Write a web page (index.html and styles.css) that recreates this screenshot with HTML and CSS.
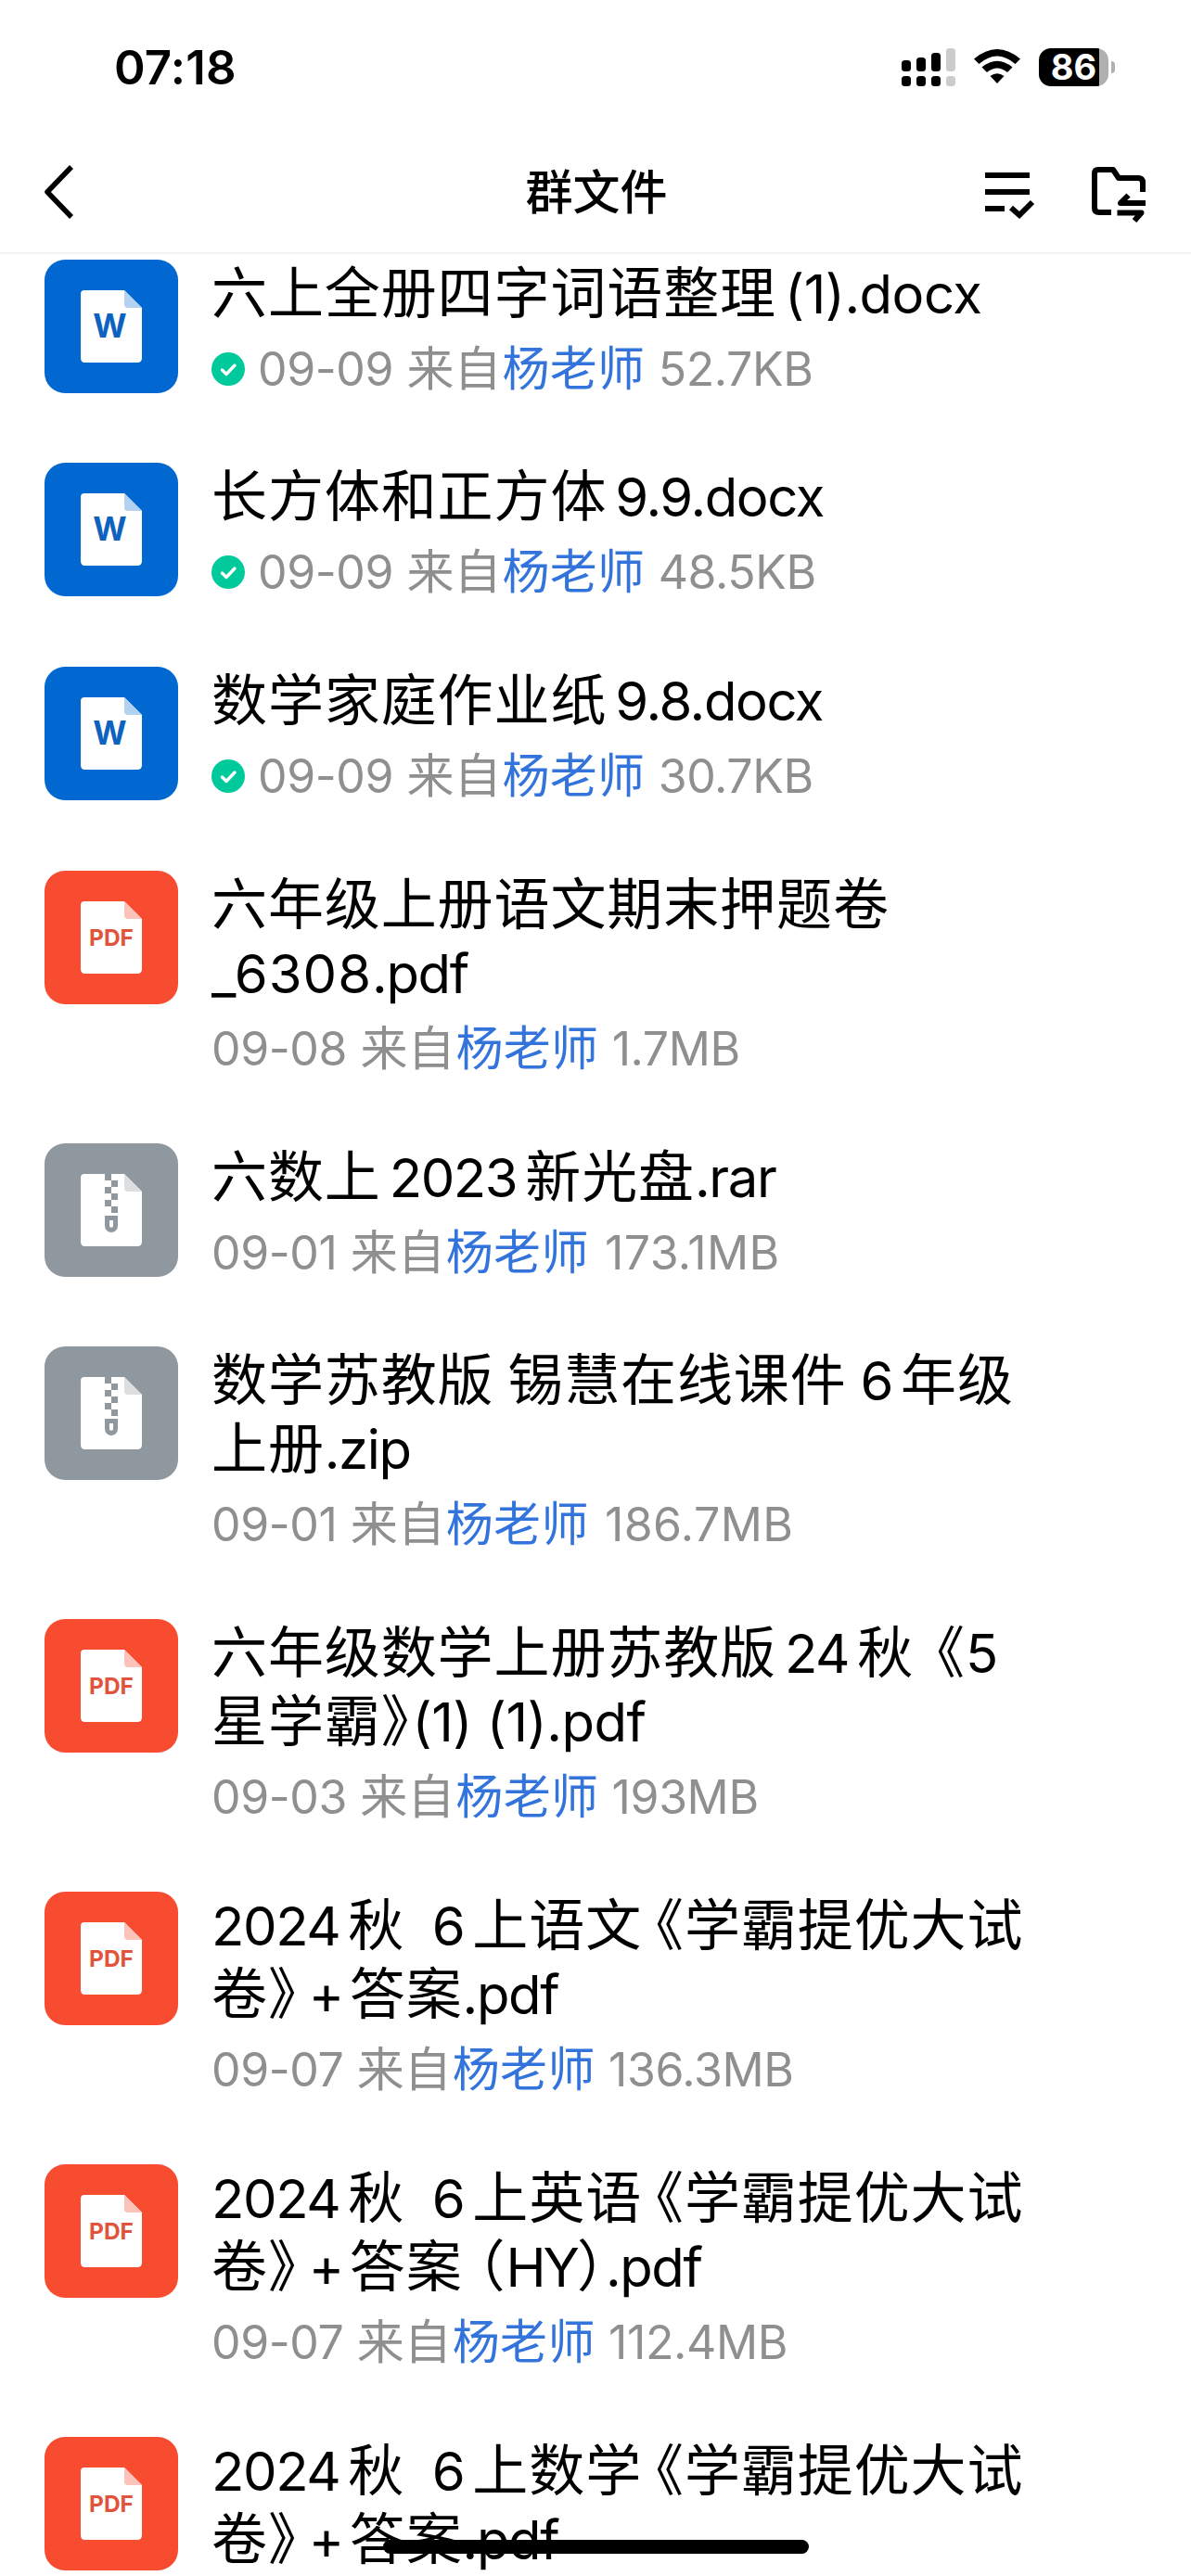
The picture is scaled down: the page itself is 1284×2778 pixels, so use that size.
FILE: index.html
```html
<!DOCTYPE html>
<html lang="zh-CN">
<head>
    <meta charset="UTF-8">
    <meta name="viewport" content="width=device-width, initial-scale=1.0">
    <title>群文件</title>
    <link rel="stylesheet" href="styles.css">
</head>
<body>
    <!-- Símbolos reutilizados en la lista -->
    <svg width="0" height="0" class="symbols">
        <symbol id="sheet" viewBox="0 0 144 144">
            <path fill="#fff" d="M43 33H86L105 52V106Q105 111 100 111H43.500Q39 111 39 106V37Q39 33 43 33Z"/>
        </symbol>
        <symbol id="doc" viewBox="0 0 144 144">
            <use href="#sheet"/>
            <path fill="#b3d1f0" d="M86 33L105 52H90Q86 52 86 48Z"/>
        </symbol>
        <symbol id="pdf" viewBox="0 0 144 144">
            <use href="#sheet"/>
            <path fill="#fdc3bb" d="M86 33L105 52H90Q86 52 86 48Z"/>
        </symbol>
        <symbol id="zip" viewBox="0 0 144 144">
            <use href="#sheet"/>
            <path fill="#dcdee0" d="M86 33L105 52H90Q86 52 86 48Z"/>
            <path fill="#8f979f" d="M65 33h7v7h-7zM72 40h7v7h-7zM65 47h7v7h-7zM72 54h7v7h-7zM65 61h7v7h-7zM72 68h7v7h-7z"/>
            <path fill="#8f979f" fill-rule="evenodd" d="M65 78H79V89A7 7 0 0 1 65 89ZM70 83V89.500Q72 92 74 89.500V83Z"/>
        </symbol>
        <symbol id="done" viewBox="0 0 36 36">
            <circle cx="18" cy="18" r="18" fill="#00c99b"/>
            <path fill="none" stroke="#fff" stroke-width="3.400" stroke-linecap="round" stroke-linejoin="round" d="M11.500 19L16 23.500L25 14"/>
        </symbol>
    </svg>

    <div class="screen">
        <div class="status-bar">
            <span class="time">07:18</span>
            <div class="status-icons">
                <svg class="signal" viewBox="0 0 58 41">
                    <rect x="0" y="13" width="10" height="12" rx="3.500"/>
                    <rect x="16" y="10" width="10" height="15" rx="3.500"/>
                    <rect x="32" y="5" width="10" height="20" rx="3.500"/>
                    <rect x="48" y="0" width="10" height="25" rx="3.500" fill="#ccc"/>
                    <rect x="0" y="30" width="10" height="11" rx="3.500"/>
                    <rect x="16" y="30" width="10" height="11" rx="3.500"/>
                    <rect x="32" y="30" width="10" height="11" rx="3.500"/>
                    <rect x="48" y="30" width="10" height="11" rx="3.500" fill="#ccc"/>
                </svg>
                <svg class="wifi" viewBox="0 0 52 38">
                    <path d="M1 10.500Q26 -10.500 51 10.500L45.500 16Q26 -1 6.500 16Z"/>
                    <path d="M9.500 19.500Q26 6 42.500 19.500L37 25Q26 16 15 25Z"/>
                    <path d="M18.500 29Q26 23.500 33.500 29L26 37Z"/>
                </svg>
                <div class="battery">
                    <div class="battery-body">86</div>
                    <div class="battery-cap"></div>
                </div>
            </div>
        </div>

        <div class="nav-bar">
            <svg class="back" viewBox="0 0 32 58">
                <path d="M29 2L3 29L29 56"/>
            </svg>
            <h1>群文件</h1>
            <div class="nav-actions">
                <svg class="sort" viewBox="0 0 54 52">
                    <path d="M0 3H48M0 21H48M0 39H21"/>
                    <path d="M28 38L37 46L51 32"/>
                </svg>
                <svg class="folder" viewBox="0 0 58 60">
                    <path d="M21 49H8Q3 49 3 44V7Q3 3 7 3H23L29 12H50Q55 12 55 17V27"/>
                    <path d="M58 39H31L39.500 30.500"/>
                    <path d="M27.500 49.500H53.500L46 58"/>
                </svg>
            </div>
        </div>

        <div class="file-list">
            <div class="file">
                <svg class="icon icon-doc"><use href="#doc"/><text x="70.500" y="84">W</text></svg>
                <div class="info">
                    <div class="name">六上全册四字词语整理<span class="en gap loose">(1).docx</span></div>
                    <div class="meta"><svg class="done"><use href="#done"/></svg><span class="en">09-09</span> 来自<span class="from">杨老师</span> <span class="en">52.7KB</span></div>
                </div>
            </div>
            <div class="file">
                <svg class="icon icon-doc"><use href="#doc"/><text x="70.500" y="84">W</text></svg>
                <div class="info">
                    <div class="name">长方体和正方体<span class="en gap">9.9.docx</span></div>
                    <div class="meta"><svg class="done"><use href="#done"/></svg><span class="en">09-09</span> 来自<span class="from">杨老师</span> <span class="en">48.5KB</span></div>
                </div>
            </div>
            <div class="file">
                <svg class="icon icon-doc"><use href="#doc"/><text x="70.500" y="84">W</text></svg>
                <div class="info">
                    <div class="name">数学家庭作业纸<span class="en gap">9.8.docx</span></div>
                    <div class="meta"><svg class="done"><use href="#done"/></svg><span class="en">09-09</span> 来自<span class="from">杨老师</span> <span class="en">30.7KB</span></div>
                </div>
            </div>
            <div class="file">
                <svg class="icon icon-pdf"><use href="#pdf"/><text x="72" y="81">PDF</text></svg>
                <div class="info">
                    <div class="name">六年级上册语文期末押题卷<br><span class="en wide">_6308</span><span class="en">.pdf</span></div>
                    <div class="meta"><span class="en">09-08</span> 来自<span class="from">杨老师</span> <span class="en">1.7MB</span></div>
                </div>
            </div>
            <div class="file">
                <svg class="icon icon-zip"><use href="#zip"/></svg>
                <div class="info">
                    <div class="name">六数上<span class="en gap">2023</span><span class="after">新光盘</span><span class="en">.rar</span></div>
                    <div class="meta"><span class="en">09-01</span> 来自<span class="from">杨老师</span> <span class="en size-mb">173.1MB</span></div>
                </div>
            </div>
            <div class="file">
                <svg class="icon icon-zip"><use href="#zip"/></svg>
                <div class="info">
                    <div class="name">数学苏教版 锡慧在线课件 <span class="en">6</span><span class="after">年级</span><br>上册<span class="en">.zip</span></div>
                    <div class="meta"><span class="en">09-01</span> 来自<span class="from">杨老师</span> <span class="en size-mb">186.7MB</span></div>
                </div>
            </div>
            <div class="file">
                <svg class="icon icon-pdf"><use href="#pdf"/><text x="72" y="81">PDF</text></svg>
                <div class="info">
                    <div class="name">六年级数学上册苏教版<span class="en gap">24</span><span class="after">秋</span><span class="half open-wide">《</span><span class="en">5</span><br>星学霸<span class="half close">》</span><span class="en loose">(1) (1).pdf</span></div>
                    <div class="meta"><span class="en">09-03</span> 来自<span class="from">杨老师</span> <span class="en">193MB</span></div>
                </div>
            </div>
            <div class="file">
                <svg class="icon icon-pdf"><use href="#pdf"/><text x="72" y="81">PDF</text></svg>
                <div class="info">
                    <div class="name"><span class="en">2024</span><span class="after">秋</span>&nbsp; <span class="en">6</span><span class="after">上语文</span><span class="half open">《</span>学霸提优大试<br>卷<span class="half close">》</span><span class="en plus">+</span>答案<span class="en">.pdf</span></div>
                    <div class="meta"><span class="en">09-07</span> 来自<span class="from">杨老师</span> <span class="en">136.3MB</span></div>
                </div>
            </div>
            <div class="file">
                <svg class="icon icon-pdf"><use href="#pdf"/><text x="72" y="81">PDF</text></svg>
                <div class="info">
                    <div class="name"><span class="en">2024</span><span class="after">秋</span>&nbsp; <span class="en">6</span><span class="after">上英语</span><span class="half open">《</span>学霸提优大试<br>卷<span class="half close">》</span><span class="en plus">+</span>答案<span class="half paren">（</span><span class="en tight">HY</span><span class="half">）</span><span class="en">.pdf</span></div>
                    <div class="meta"><span class="en">09-07</span> 来自<span class="from">杨老师</span> <span class="en">112.4MB</span></div>
                </div>
            </div>
            <div class="file">
                <svg class="icon icon-pdf"><use href="#pdf"/><text x="72" y="81">PDF</text></svg>
                <div class="info">
                    <div class="name"><span class="en">2024</span><span class="after">秋</span>&nbsp; <span class="en">6</span><span class="after">上数学</span><span class="half open">《</span>学霸提优大试<br>卷<span class="half close">》</span><span class="en plus">+</span>答案<span class="en">.pdf</span></div>
                </div>
            </div>
        </div>

        <div class="home-indicator"></div>
    </div>
</body>
</html>
```

FILE: styles.css
```css
body {
    margin: 0;
    background-color: #fff;
    color: #000;
    font-family: Inter, "Noto Sans CJK SC", sans-serif;
}
.symbols {
    display: block;
}
.screen {
    position: relative;
    width: 1284px;
    height: 2778px;
    overflow: hidden;
}
.status-bar {
    display: flex;
    justify-content: space-between;
    box-sizing: border-box;
    height: 140px;
    padding: 52px 82px 0 123px;
}
.time {
    font-size: 51px;
    line-height: 42px;
    font-weight: 600;
    letter-spacing: 0.2px;
}
.status-icons {
    display: flex;
    align-items: flex-start;
}
.signal {
    width: 58px;
    height: 41px;
}
.wifi {
    width: 52px;
    height: 38px;
    margin: 1px 19px 0 19px;
}
.battery {
    display: flex;
    align-items: center;
}
.battery-body {
    width: 75px;
    height: 41px;
    border-radius: 13px;
    background: linear-gradient(to right, #000 65px, #b0b0b0 65px);
    color: #fff;
    font-size: 38px;
    line-height: 41px;
    font-weight: 700;
    text-align: center;
}
.battery-cap {
    width: 4px;
    height: 13px;
    margin-left: 3px;
    border-radius: 0 4px 4px 0;
    background-color: #b0b0b0;
}
.nav-bar {
    display: grid;
    grid-template-columns: 1fr auto 1fr;
    align-items: center;
    box-sizing: border-box;
    height: 134px;
    padding: 2px 49px 0 48px;
    border-bottom: 2px solid #f4f4f4;
}
.nav-bar svg {
    fill: none;
    stroke: #000;
    stroke-width: 6;
}
.nav-bar .back {
    width: 32px;
    height: 58px;
    stroke-width: 5.5;
    stroke-linejoin: round;
}
.nav-bar h1 {
    margin: 2px 0 0 3px;
    font-size: 51px;
    line-height: 60px;
    font-weight: 500;
}
.nav-actions {
    display: flex;
    justify-content: flex-end;
    align-items: center;
}
.sort {
    width: 54px;
    height: 52px;
    margin: 10px 61px 0 0;
}
.folder {
    width: 58px;
    height: 60px;
    margin-top: 6px;
    stroke-linejoin: round;
}
.file-list {
    padding: 5.5px 48px 0;
}
.file {
    display: flex;
    gap: 36px;
    padding-bottom: 71.8px;
}
.icon {
    flex: none;
    width: 144px;
    height: 144px;
    border-radius: 22px;
}
.icon text {
    font-weight: 700;
    text-anchor: middle;
}
.icon-doc {
    background-color: #0068d0;
}
.icon-doc text {
    font-size: 35px;
    fill: #0d62c0;
}
.icon-pdf {
    background-color: #f84c30;
}
.icon-pdf text {
    font-size: 24.5px;
    fill: #e2533c;
}
.icon-zip {
    background-color: #8f979f;
}
.info {
    margin-top: -1px;
    white-space: nowrap;
}
.name {
    font-size: 60px;
    line-height: 74px;
    letter-spacing: 0.9px;
    word-spacing: -3px;
}
.name .en {
    font-size: 58px;
    letter-spacing: -1.4px;
    line-height: 0;
}
.name .loose {
    letter-spacing: -0.5px;
    word-spacing: 0;
}
.name .wide {
    letter-spacing: 1px;
}
.name .tight {
    letter-spacing: -3px;
}
.name .gap {
    margin-left: 9px;
}
.name .after {
    margin-left: 9px;
}
/* signos chinos a medio ancho */
.name .half {
    font-feature-settings: "halt";
}
.name .open {
    margin-left: 15px;
}
.name .open-wide {
    margin-left: 25px;
}
.name .paren {
    margin-left: 16px;
}
.name .close {
    margin-right: 3px;
}
.name .plus {
    margin: 0 7px 0 10px;
}
.meta {
    margin-top: 15px;
    font-size: 51px;
    line-height: 60px;
    color: #8f8f8f;
}
.meta .en {
    font-size: 50px;
    line-height: 0;
    letter-spacing: -0.4px;
}
.meta .size-mb {
    margin-left: 3px;
    letter-spacing: 0.4px;
}
.from {
    margin-left: 1px;
    color: #3273dc;
    letter-spacing: 0.3px;
}
.done {
    width: 36px;
    height: 36px;
    margin: 0 14px 0 0;
}
.home-indicator {
    position: absolute;
    left: 413px;
    bottom: 24px;
    width: 459px;
    height: 15px;
    border-radius: 8px;
    background-color: #000;
}
```
